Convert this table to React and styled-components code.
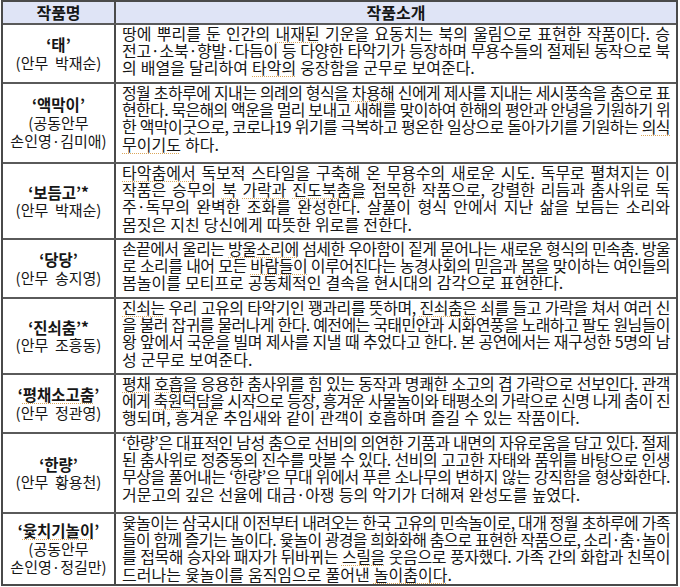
import React, { useLayoutEffect, useRef, useState } from "react";
import styled, { createGlobalStyle } from "styled-components";

const GlobalStyle = createGlobalStyle`
  html, body { margin: 0; padding: 0; background: #ffffff; }
  body {
    font-family: "Noto Sans CJK KR", "Noto Sans", sans-serif;
    color: #161616;
  }
`;

const Table = styled.div`
  width: 677px;
  margin-left: 1px;
  border: 2px solid #4a4a4a;
  box-sizing: border-box;
`;

const HeaderRow = styled.div`
  display: grid;
  grid-template-columns: 113px 1fr;
  height: 21px;
  background: #dfe4f6;
`;

const HeaderCell = styled.div`
  display: flex;
  align-items: center;
  justify-content: center;
  font-size: 16px;
  font-weight: 700;
  line-height: 21px;
  border-right: ${(p) => (p.$divider ? "2px solid #4a4a4a" : "none")};
`;

const Row = styled.div`
  display: grid;
  grid-template-columns: 113px 1fr;
  height: ${(p) => p.$h}px;
  box-sizing: border-box;
  border-top: 2px solid #5a5a5a;
`;

const NameCell = styled.div`
  display: flex;
  flex-direction: column;
  align-items: center;
  justify-content: center;
  border-right: 2px solid #4a4a4a;
  font-size: 15px;
  line-height: 18.5px;
  text-align: center;
`;

const Title = styled.div`
  font-weight: 700;
  font-size: 15.5px;
`;

const Credit = styled.div`
  white-space: pre;
`;

const DescCell = styled.div`
  padding: 0 6px 0 6px;
  font-size: 16px;
  line-height: 17.2px;
  min-width: 0;
`;

const LineBox = styled.div`
  white-space: nowrap;
  word-spacing: 0.5px;
  text-align: ${(p) => (p.$last ? "left" : "justify")};
  text-align-last: ${(p) => (p.$last ? "left" : "justify")};
`;

const Mark = styled.span`
  text-decoration: underline dotted #dba65a;
  text-decoration-thickness: 1px;
  text-underline-offset: 2px;
`;

const renderMarked = (str) =>
  str.split(/(\[[^\]]+\])/).map((part, i) =>
    part.startsWith("[") ? (
      <Mark key={i}>{part.slice(1, -1)}</Mark>
    ) : (
      <React.Fragment key={i}>{part}</React.Fragment>
    )
  );

// A justified line that tightens its letter spacing when it is wider than the cell.
function Line({ text, last }) {
  const ref = useRef(null);
  const [ls, setLs] = useState(0);
  useLayoutEffect(() => {
    const el = ref.current;
    if (!el) return;
    el.style.letterSpacing = "0px";
    const over = el.scrollWidth - el.clientWidth;
    const n = el.textContent.length;
    const next = over > 0 ? -(over + 1) / n : 0;
    el.style.letterSpacing = "";
    setLs(next);
  }, [text]);
  return (
    <LineBox ref={ref} $last={last} style={ls ? { letterSpacing: `${ls}px` } : undefined}>
      {renderMarked(text)}
    </LineBox>
  );
}

const rows = [
  {
    h: 59,
    title: "‘태’",
    credit: ["(안무  박재순)"],
    lines: [
      "땅에 뿌리를 둔 인간의 [내재된] 기운을 요동치는 북의 울림으로 표현한 작품이다. 승",
      "전고·소북·향발·다듬이 등 다양한 타악기가 등장하며 무용수들의 절제된 동작으로 북",
      "의 배열을 달리하여 [타악의] 웅장함을 군무로 보여준다.",
    ],
  },
  {
    h: 80,
    title: "‘액막이’",
    credit: ["(공동안무", "손인영·김미애)"],
    lines: [
      "정월 초하루에 지내는 의례의 형식을 [차용해] 신에게 제사를 지내는 세시풍속을 춤으로 표",
      "현한다. 묵은해의 액운을 멀리 보내고 새해를 맞이하여 한해의 평안과 안녕을 기원하기 위",
      "한 액막이굿으로, 코로나19 위기를 극복하고 평온한 일상으로 돌아가기를 기원하는 [의식]",
      "[무이기도] 하다.",
    ],
  },
  {
    h: 76,
    title: "‘보듬고’*",
    credit: ["(안무  박재순)"],
    lines: [
      "[타악춤에서] 독보적 스타일을 구축해 온 무용수의 새로운 시도. 독무로 펼쳐지는 이",
      "작품은 승무의 [북] [가락과] [진도북춤을] 접목한 작품으로, 강렬한 리듬과 춤사위로 독",
      "주·독무의 완벽한 조화를 완성한다. 살풀이 형식 안에서 지난 삶을 보듬는 소리와",
      "몸짓은 지친 당신에게 따뜻한 위로를 전한다.",
    ],
  },
  {
    h: 59,
    title: "‘당당’",
    credit: ["(안무  송지영)"],
    lines: [
      "손끝에서 울리는 [방울소리에] 섬세한 우아함이 짙게 묻어나는 새로운 형식의 민속춤. 방울",
      "로 소리를 내어 모든 [바람들이] 이루어진다는 농경사회의 믿음과 봄을 맞이하는 여인들의",
      "봄놀이를 모티프로 공동체적인 결속을 현시대의 감각으로 표현한다.",
    ],
  },
  {
    h: 76,
    title: "‘진쇠춤’*",
    credit: ["(안무  조흥동)"],
    lines: [
      "[진쇠는] 우리 고유의 타악기인 꽹과리를 뜻하며, [진쇠춤은] 쇠를 들고 가락을 쳐서 여러 신",
      "을 불러 잡귀를 물러나게 한다. 예전에는 국태민안과 시화연풍을 노래하고 팔도 원님들이",
      "왕 앞에서 국운을 빌며 제사를 지낼 때 추었다고 한다. 본 공연에서는 재구성한 5명의 남",
      "성 군무로 보여준다.",
    ],
  },
  {
    h: 59,
    title: "‘[평채소고춤]’",
    credit: ["(안무  정관영)"],
    lines: [
      "[평채] [호흡을] 응용한 춤사위를 힘 있는 동작과 명쾌한 소고의 겹 가락으로 선보인다. 관객",
      "에게 [축원덕담을] 시작으로 등장, 흥겨운 사물놀이와 태평소의 가락으로 신명 나게 춤이 진",
      "행되며, 흥겨운 추임새와 같이 관객이 호흡하며 즐길 수 있는 작품이다.",
    ],
  },
  {
    h: 80,
    title: "‘한량’",
    credit: ["(안무  황용천)"],
    lines: [
      "‘한량’은 대표적인 남성 춤으로 선비의 의연한 기품과 내면의 자유로움을 담고 있다. 절제",
      "된 춤사위로 정중동의 진수를 맛볼 수 있다. 선비의 고고한 자태와 품위를 바탕으로 인생",
      "무상을 풀어내는 ‘한량’은 무대 위에서 푸른 소나무의 변하지 않는 강직함을 형상화한다.",
      "거문고의 깊은 선율에 대금·아쟁 등의 악기가 더해져 완성도를 높였다.",
    ],
  },
  {
    h: 72,
    title: "‘[윷치기놀이]’",
    credit: ["(공동안무", "손인영·정길만)"],
    lines: [
      "윷놀이는 삼국시대 이전부터 내려오는 한국 고유의 민속놀이로, 대개 정월 초하루에 가족",
      "들이 함께 즐기는 놀이다. 윷놀이 광경을 희화화해 춤으로 표현한 작품으로, 소리·춤·놀이",
      "를 접목해 승자와 패자가 뒤바뀌는 [스릴을] 웃음으로 풍자했다. 가족 간의 화합과 친목이",
      "드러나는 윷놀이를 움직임으로 풀어낸 [놀이춤이다].",
    ],
  },
];

export default function App() {
  return (
    <>
      <GlobalStyle />
      <Table>
        <HeaderRow>
          <HeaderCell $divider>작품명</HeaderCell>
          <HeaderCell>작품소개</HeaderCell>
        </HeaderRow>
        {rows.map((r, i) => (
          <Row key={i} $h={r.h}>
            <NameCell>
              <Title>{renderMarked(r.title)}</Title>
              {r.credit.map((c, j) => (
                <Credit key={j}>{c}</Credit>
              ))}
            </NameCell>
            <DescCell>
              {r.lines.map((l, j) => (
                <Line key={j} text={l} last={j === r.lines.length - 1} />
              ))}
            </DescCell>
          </Row>
        ))}
      </Table>
    </>
  );
}
